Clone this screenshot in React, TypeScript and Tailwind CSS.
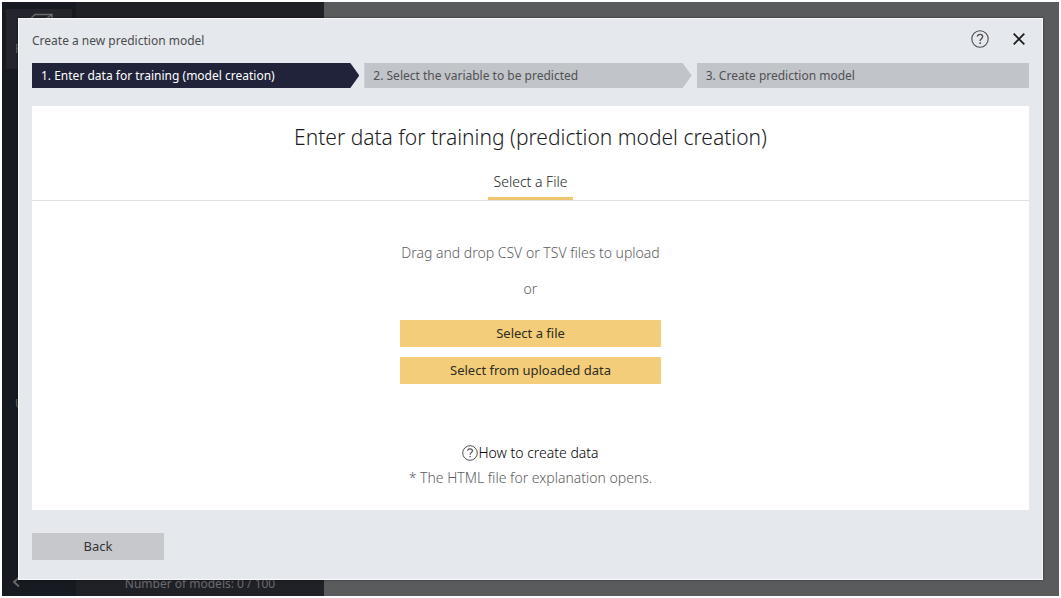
import React from "react";

function HelpIcon({ className }: { className: string }) {
  return (
    <svg viewBox="0 0 18 18" className={className} fill="none" stroke="currentColor" aria-hidden="true">
      <circle cx="9" cy="9" r="8.2" strokeWidth="1.1" />
      <path d="M6.3 6.5C6.5 5.100 7.600 4.300 9 4.300c1.600 0 2.700.9 2.700 2.300 0 2-2.600 2.100-2.600 4.300" strokeWidth="1.300" />
      <path d="M9.100 12.300v1.600" strokeWidth="1.500" />
    </svg>
  );
}

function Backdrop() {
  return (
    <div className="flex min-h-[calc(100vh-4px)] bg-[#5a5b5d]" aria-hidden="true">
      <div className="flex w-[74px] flex-col bg-[#171a21] px-1 pt-[7px] pb-2 text-[#6b6b6e]">
        <div className="flex h-[60px] flex-col bg-[#24252d] pt-1 pl-[9px]">
          <svg viewBox="0 0 28 24" className="ml-3 h-6 w-7" fill="none" stroke="currentColor" strokeWidth="1.5">
            <path d="M2 7 8 1.500h17v10l-6 6H2zM2 6h17l6-4.500M19 6v11" />
          </svg>
          <span className="pt-0.5 text-xs leading-5">P</span>
        </div>
        <div className="flex-[9]" />
        <span className="pl-[9px] text-xs">U</span>
        <div className="flex-[4.500]" />
        <svg viewBox="0 0 10 12" className="ml-[5px] h-3 w-2.5" fill="none" stroke="currentColor" strokeWidth="1.800">
          <path d="M8 1.500 3 6l5 4.500" />
        </svg>
      </div>
      <div className="flex w-[248px] items-end justify-center bg-[#202027] text-xs leading-6 text-[#6b6b6e]">
        Number of models: 0 / 100
      </div>
    </div>
  );
}

function Steps() {
  const arrow = "[clip-path:polygon(0_0,calc(100%-9px)_0,100%_50%,calc(100%-9px)_100%,0_100%)]";
  return (
    <ol className="mt-3 grid grid-cols-[327fr_327fr_332fr] gap-[5px] text-xs leading-[26px]">
      <li aria-current="step" className={`${arrow} h-[25px] bg-[#20233a] pl-[9px] text-white`}>
        1. Enter data for training (model creation)
      </li>
      <li className={`${arrow} h-[25px] bg-[#c1c4c9] pl-[9px] text-[#505154]`}>
        2. Select the variable to be predicted
      </li>
      <li className="h-[25px] bg-[#c1c4c9] pl-[9px] text-[#505154]">3. Create prediction model</li>
    </ol>
  );
}

function ActionButton({ children }: { children: React.ReactNode }) {
  return (
    <button type="button" className="h-[27px] w-[261px] rounded-[1px] bg-[#f3cd79] text-[13px] text-[#2e2b25]">
      {children}
    </button>
  );
}

export default function App() {
  return (
    <div className="relative min-h-screen bg-white p-0.5 font-['Noto_Sans',sans-serif]">
      <Backdrop />
      <div className="absolute inset-0 flex p-[18px]">
        <section
          role="dialog"
          aria-labelledby="dialog-title"
          className="flex flex-1 flex-col border border-[#f8f9fb] bg-[#e5e8ed] px-[13px] pt-2 pb-[19px] shadow-[0_0_2px_rgba(0,0,0,0.6)]"
        >
          <header className="flex h-6 items-center justify-between">
            <h1 id="dialog-title" className="pt-[3px] text-xs text-[#4b4c4f]">
              Create a new prediction model
            </h1>
            <div className="flex items-center gap-[22px] pr-0.5">
              <button type="button" aria-label="Help" className="text-[#4b4c4f]">
                <HelpIcon className="h-[18px] w-[18px]" />
              </button>
              <button type="button" aria-label="Close" className="text-[#1c1c1e]">
                <svg viewBox="0 0 16 16" className="h-4 w-4" stroke="currentColor" strokeWidth="1.800" aria-hidden="true">
                  <path d="m2.700 2.700 10.600 10.600m0-10.600-10.600 10.600" />
                </svg>
              </button>
            </div>
          </header>
          <Steps />
          <main className="mt-[18px] flex flex-1 flex-col items-center bg-white pt-[15px] text-sm font-light text-[#5c5d61]">
            <h2 className="text-[21px] leading-8 text-[#1c1c1e]">
              Enter data for training (prediction model creation)
            </h2>
            <div role="tablist" className="mt-[13px] flex w-full justify-center border-b border-[#dfe0e2]">
              <button
                type="button"
                role="tab"
                aria-selected="true"
                className="h-[34px] border-b-[3px] border-[#efc66f] px-1.5 text-[#1c1c1e]"
              >
                Select a File
              </button>
            </div>
            <p className="mt-10 leading-6">Drag and drop CSV or TSV files to upload</p>
            <p className="mt-3 leading-6">or</p>
            <div className="mt-[19px] flex flex-col gap-[10px] font-normal">
              <ActionButton>Select a file</ActionButton>
              <ActionButton>Select from uploaded data</ActionButton>
            </div>
            <a href="#how-to" className="mt-14 flex items-center leading-[25px] text-black">
              <HelpIcon className="h-4 w-4 text-[#4b4c4f]" />
              How to create data
            </a>
            <p className="leading-[25px]">* The HTML file for explanation opens.</p>
          </main>
          <footer className="mt-[23px]">
            <button type="button" className="h-[27px] w-[132px] rounded-[1px] bg-[#c7c8cc] text-[13px] text-[#333437]">
              Back
            </button>
          </footer>
        </section>
      </div>
    </div>
  );
}
